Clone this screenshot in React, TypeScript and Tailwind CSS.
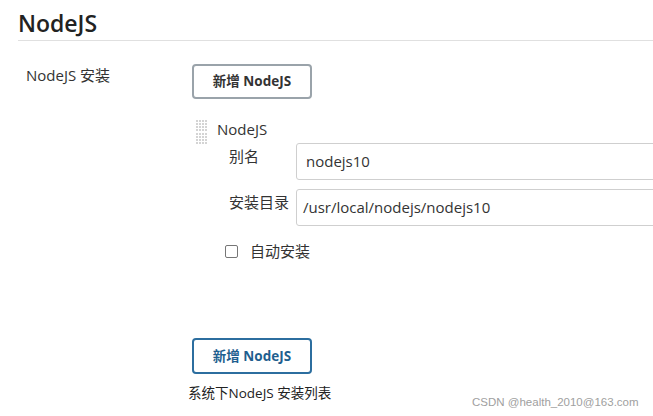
import React from 'react';

function AddButton({ blue }: { blue?: boolean }) {
  return (
    <button
      className={
        blue
          ? 'w-[120px] h-[36px] rounded-[4px] border-2 border-[#2c6e9f] bg-white text-[13.5px] font-bold text-[#1f5f8f]'
          : 'w-[120px] h-[35px] rounded-[4px] border-2 border-[#9aa3aa] bg-white text-[13.5px] font-bold text-[#333]'
      }
    >
      新增 NodeJS
    </button>
  );
}

function DragHandle() {
  return (
    <div className="grid grid-cols-4 gap-[1px] w-[11px] h-[24px]">
      {Array.from({ length: 32 }).map((_, i) => (
        <div key={i} className="w-[2px] h-[2px] bg-[#d4d4d4]" />
      ))}
    </div>
  );
}

export default function App() {
  return (
    <div className="w-[653px] h-[416px] overflow-hidden bg-white relative font-['Open_Sans','Noto_Sans_CJK_SC',sans-serif] text-[#333]">
      <div className="pl-[18px] pt-[9px]">
        <h2 className="text-[23px] font-semibold leading-[28px] text-[#222] pb-[3px] border-b border-[#e0e0e0]">NodeJS</h2>

        <div className="flex mt-[23px]">
          <div className="w-[174px] pl-[8px] pt-[1px] text-[15px] leading-[20px]">NodeJS 安装</div>

          <div className="flex-1 min-w-0">
            <AddButton />

            <div className="flex items-start mt-[21px] pl-[4px]">
              <DragHandle />
              <span className="ml-[10px] -mt-[1px] text-[15px] leading-[20px]">NodeJS</span>
            </div>

            <div className="ml-[37px] -mt-[1px] flex flex-col gap-[9px]">
              <div className="flex items-start">
                <span className="w-[67px] pt-[3px] text-[15px] leading-[20px]">别名</span>
                <div className="flex-1 -mr-[20px] h-[37px] border border-[#cfcfcf] rounded-[3px] pl-[9px] flex items-center text-[15px]">nodejs10</div>
              </div>
              <div className="flex items-start">
                <span className="w-[67px] pt-[3px] text-[15px] leading-[20px]">安装目录</span>
                <div className="flex-1 -mr-[20px] h-[37px] border border-[#cfcfcf] rounded-[3px] pl-[6px] flex items-center text-[15px]">/usr/local/nodejs/nodejs10</div>
              </div>
            </div>

            <label className="flex items-center ml-[33px] mt-[15px] text-[15px] leading-[20px]">
              <span className="w-[13px] h-[13px] border border-[#767676] rounded-[2px] bg-white" />
              <span className="ml-[12px]">自动安装</span>
            </label>

            <div className="mt-[77px]">
              <AddButton blue />
            </div>
            <p className="-ml-[4px] mt-[10px] text-[13.5px] leading-[18px] text-[#222]">系统下NodeJS 安装列表</p>
          </div>
        </div>
      </div>

      <div className="absolute left-[472px] top-[394px] text-[11.5px] text-[#a0a0a0] font-['Liberation_Sans',sans-serif]">CSDN @health_2010@163.com</div>
    </div>
  );
}
